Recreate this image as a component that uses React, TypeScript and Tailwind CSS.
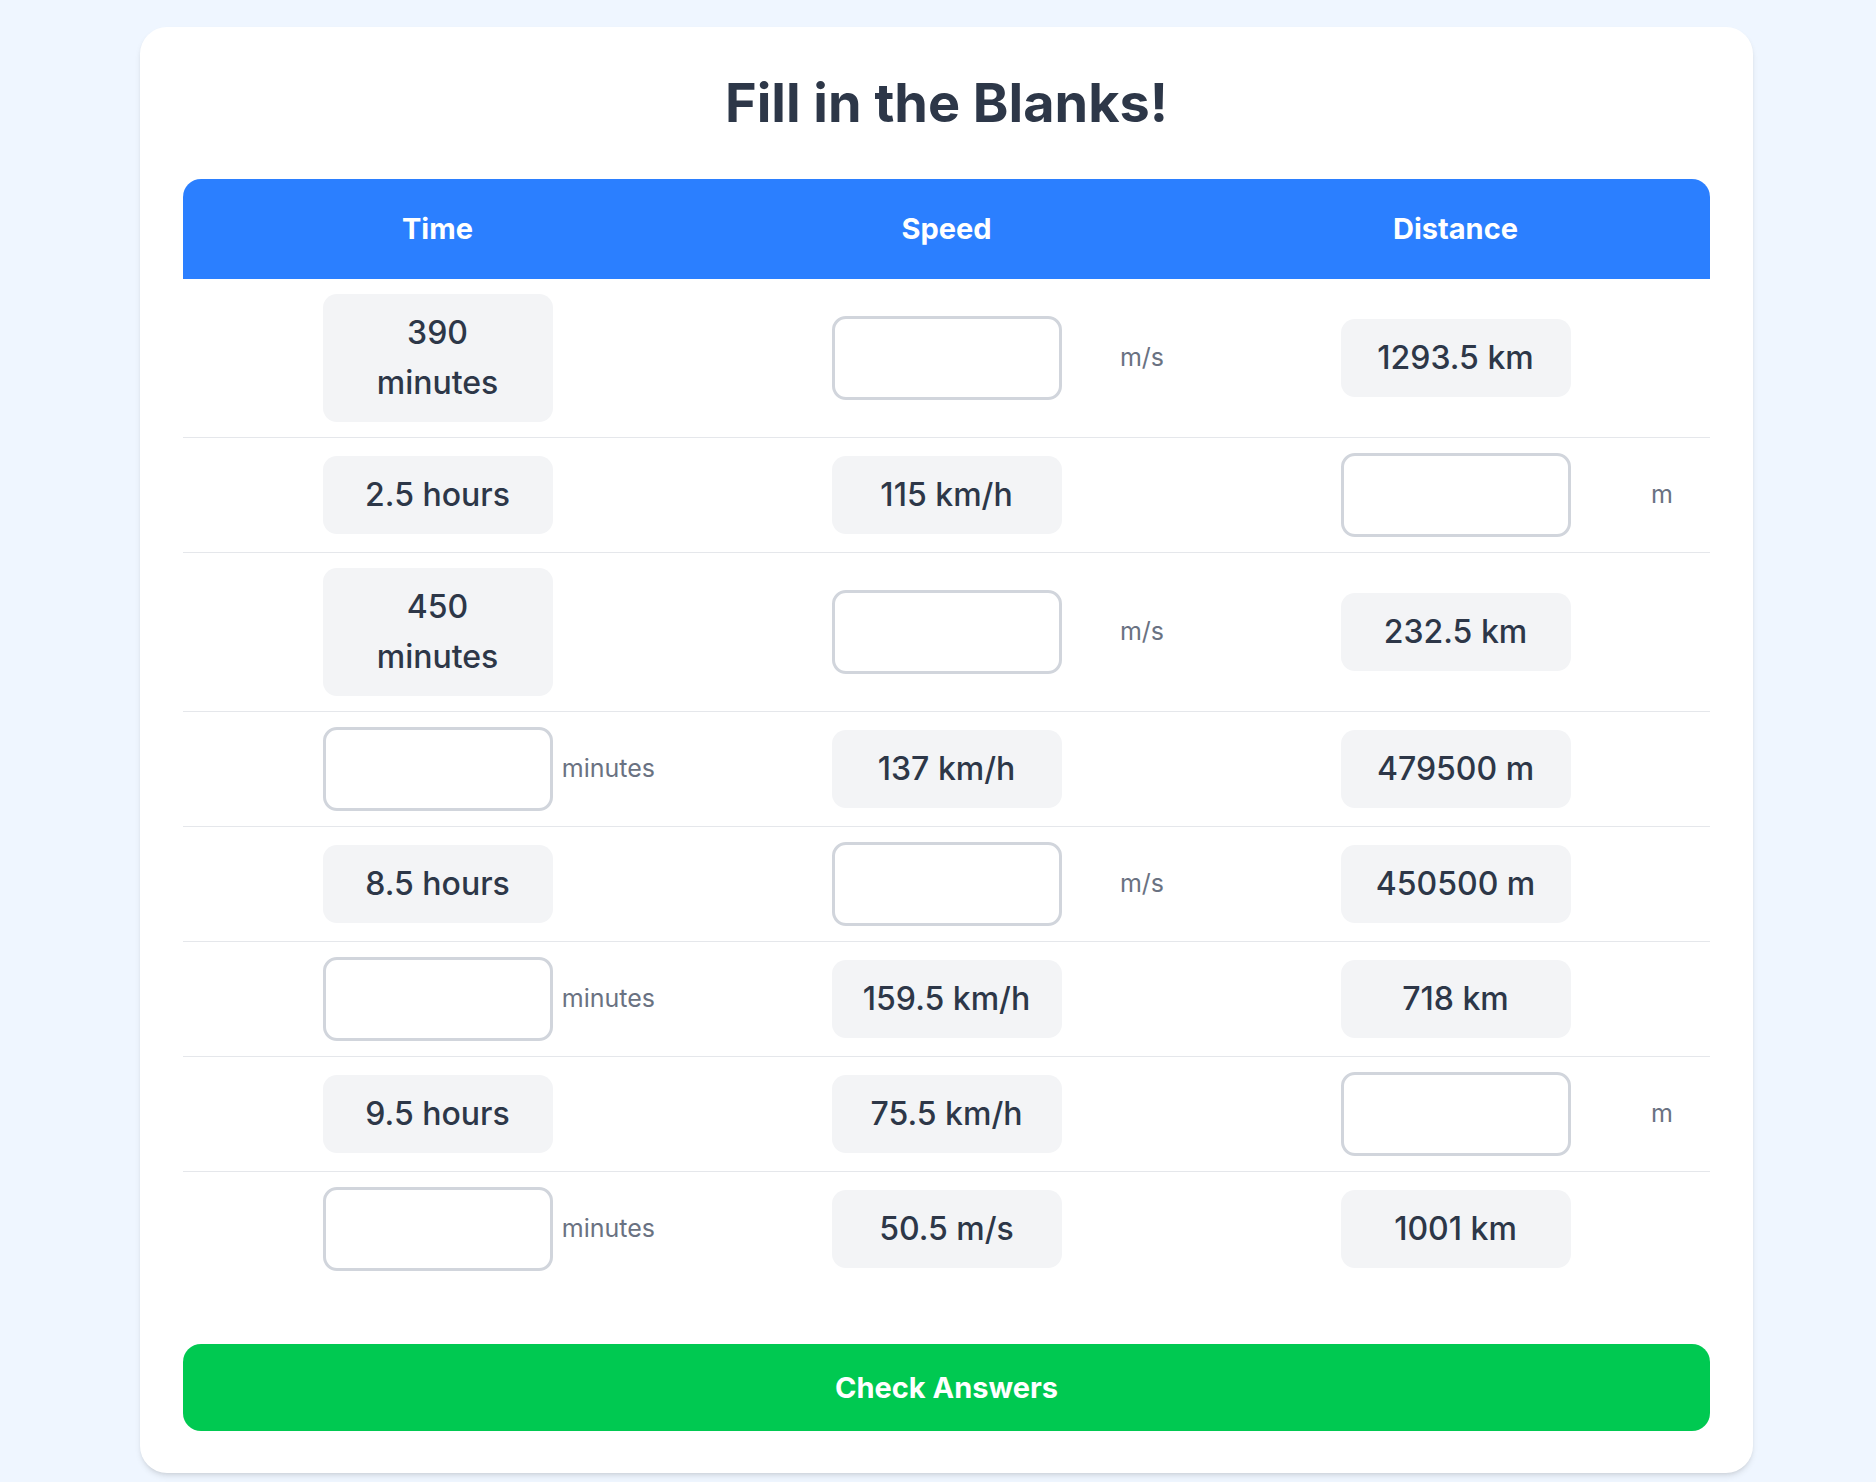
import React from "react";

type Cell = { value?: string; unit?: string };

interface Row {
  time: Cell;
  speed: Cell;
  distance: Cell;
}

// A cell with a `unit` and no `value` is a blank the student fills in.
const rows: Row[] = [
  { time: { value: "390 minutes" }, speed: { unit: "m/s" }, distance: { value: "1293.5 km" } },
  { time: { value: "2.5 hours" }, speed: { value: "115 km/h" }, distance: { unit: "m" } },
  { time: { value: "450 minutes" }, speed: { unit: "m/s" }, distance: { value: "232.5 km" } },
  { time: { unit: "minutes" }, speed: { value: "137 km/h" }, distance: { value: "479500 m" } },
  { time: { value: "8.5 hours" }, speed: { unit: "m/s" }, distance: { value: "450500 m" } },
  { time: { unit: "minutes" }, speed: { value: "159.5 km/h" }, distance: { value: "718 km" } },
  { time: { value: "9.5 hours" }, speed: { value: "75.5 km/h" }, distance: { unit: "m" } },
  { time: { unit: "minutes" }, speed: { value: "50.5 m/s" }, distance: { value: "1001 km" } },
];

export default function App() {
  return (
    <div className="min-h-screen bg-[#eff6ff] pl-[140px] pr-[123px] pt-[27px] pb-[40px] font-['Inter','Noto_Sans',sans-serif]">
      <div className="rounded-[27px] bg-white p-[43px] pb-[42px] shadow-[0_4px_6px_-1px_rgba(0,0,0,0.1),0_2px_4px_-2px_rgba(0,0,0,0.1)]">
        <h1 className="mb-[43px] text-center text-[54px] leading-[66px] font-bold text-[#2d3748]">
          Fill in the Blanks!
        </h1>

        <div className="overflow-hidden rounded-t-[18px]">
          <table className="w-full table-fixed border-collapse">
            <thead>
              <tr className="h-[100px] bg-blue-500 text-white">
                <th className="text-[29px] font-bold">Time</th>
                <th className="text-[29px] font-bold">Speed</th>
                <th className="text-[29px] font-bold">Distance</th>
              </tr>
            </thead>
            <tbody>
              {rows.map((r, i) => (
                <tr
                  key={i}
                  className={i < rows.length - 1 ? "border-b border-gray-200" : ""}
                >
                  <Td cell={r.time} />
                  <Td cell={r.speed} />
                  <Td cell={r.distance} />
                </tr>
              ))}
            </tbody>
          </table>
        </div>

        <button
          type="button"
          className="mt-[58px] h-[87px] w-full rounded-[18px] bg-green-500 text-[29px] font-bold text-white"
        >
          Check Answers
        </button>
      </div>
    </div>
  );
}

function Td({ cell }: { cell: Cell }) {
  const blank = cell.value === undefined;
  return (
    <td className="py-[15px]">
      <div className="grid grid-cols-[1fr_230px_1fr] items-center">
        <div />
        {blank ? (
          <input
            type="text"
            className="h-[84px] w-[230px] rounded-[14px] border-[3px] border-gray-300 bg-white px-4 text-[32px] text-[#2d3748] outline-none"
          />
        ) : (
          <div className="w-[230px] rounded-[14px] bg-gray-100 px-[24px] py-[14px] text-center text-[32px] leading-[50px] font-medium text-[#2d3748]">
            {cell.value}
          </div>
        )}
        {blank ? (
          <span className="justify-self-end pr-[37px] text-[25px] text-gray-500">
            {cell.unit}
          </span>
        ) : (
          <div />
        )}
      </div>
    </td>
  );
}
